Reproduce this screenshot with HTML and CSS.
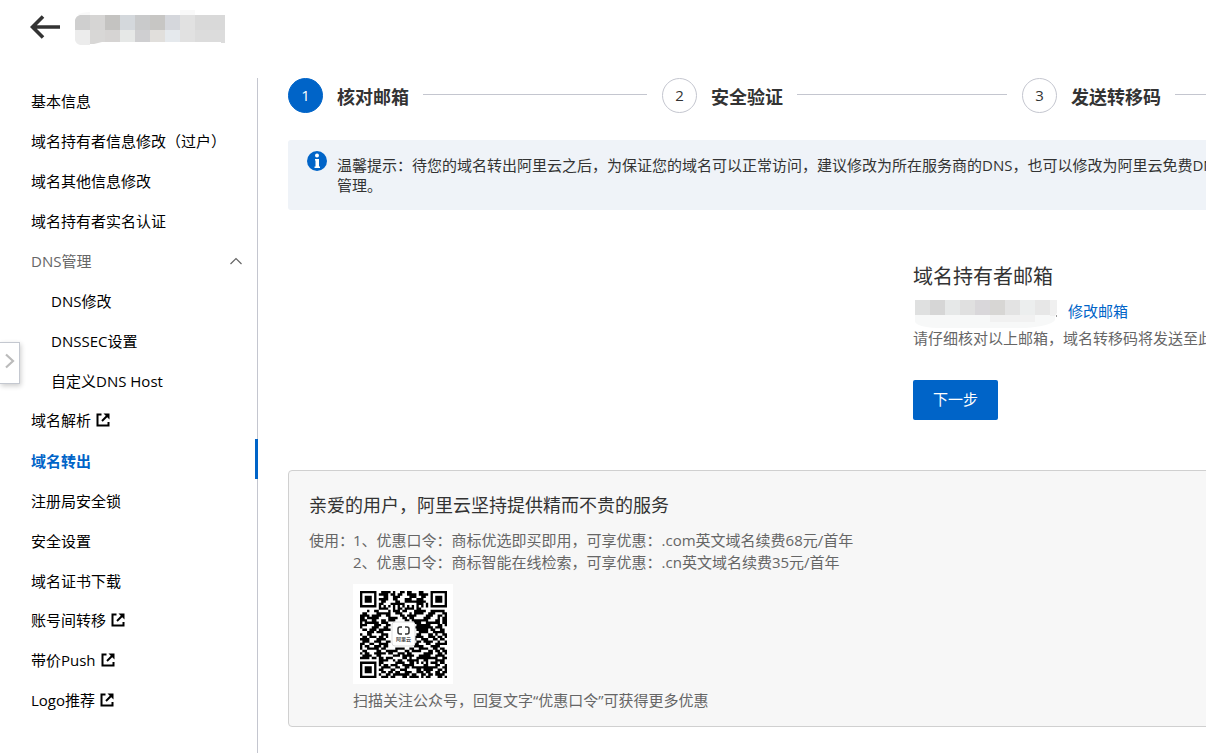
FILE: index.html
```html
<!DOCTYPE html>
<html lang="zh-CN">
<head>
<meta charset="utf-8">
<meta name="viewport" content="width=device-width, initial-scale=1">
<title>域名转出</title>
<link rel="stylesheet" href="styles.css">
</head>
<body>
<svg class="sprite" aria-hidden="true">
  <symbol id="external" viewBox="0 0 14 14">
    <path d="M5.500 1.500H1.500V12.500H12.500V9" fill="none" stroke="currentColor" stroke-width="2"/>
    <path d="M6 8L11 3" fill="none" stroke="currentColor" stroke-width="2"/>
    <path d="M7.500 0.500H13.500V6.500Z" fill="currentColor"/>
  </symbol>
</svg>
<header class="topbar">
  <button class="back" type="button" aria-label="返回">
    <svg width="30" height="24" viewBox="0 0 30 24"><path d="M13 1.500L2.500 12L13 22.500M2.500 12H30" fill="none" stroke="#333" stroke-width="3.600"/></svg>
  </button>
  <svg class="masked-name" width="150" height="36" viewBox="0 0 150 36" aria-hidden="true">
    <path fill="#f9f9f9" d="M105 0h15v5h-15zM2 5q5-3 13-3v3z"/>
    <path fill="#cfcfcf" d="M0 20V10Q1 6 5 5h10v15z"/>
    <path fill="#d6d5d4" d="M15 5h15v15H15z"/><path fill="#c4c3c1" d="M30 5h15v15H30z"/>
    <path fill="#d4d8dc" d="M45 5h15v15H45z"/><path fill="#c9cacb" d="M60 5h15v15H60z"/>
    <path fill="#c7c6c4" d="M75 5h15v15H75z"/><path fill="#d5d7dc" d="M90 5h15v15H90z"/>
    <path fill="#e1e1e1" d="M105 5h15v27h-15z"/><path fill="#d9d9d9" d="M120 5h30v15h-30z"/>
    <path fill="#ececec" d="M0 20h15v15H5q-4-1-5-5z"/><path fill="#d8d7d6" d="M15 20h15v12h-3l-8 2h-4z"/>
    <path fill="#d6d4d3" d="M30 20h15v12H30z"/><path fill="#e6e8e7" d="M45 20h15v12H45z"/>
    <path fill="#cfcfd1" d="M60 20h15v12H60z"/><path fill="#e1dfdc" d="M75 20h15v12H75z"/>
    <path fill="#e5e9ed" d="M90 20h15v12H90z"/><path fill="#dcdcdc" d="M120 20h30v13h-4v-1h-26z"/>
  </svg>
</header>

<div class="layout">
  <nav class="sidebar">
    <a class="item" href="#">基本信息</a>
    <a class="item" href="#">域名持有者信息修改（过户）</a>
    <a class="item" href="#">域名其他信息修改</a>
    <a class="item" href="#">域名持有者实名认证</a>
    <button class="item group" type="button" aria-expanded="true">DNS管理
      <svg width="12" height="8" viewBox="0 0 12 8"><path d="M0.500 7L6 1.500L11.500 7" fill="none" stroke="#666" stroke-width="1.200"/></svg>
    </button>
    <a class="item sub" href="#">DNS修改</a>
    <a class="item sub" href="#">DNSSEC设置</a>
    <a class="item sub" href="#">自定义DNS Host</a>
    <a class="item linkout" href="#">域名解析<svg class="ext"><use href="#external"/></svg></a>
    <a class="item active" href="#" aria-current="page">域名转出</a>
    <a class="item" href="#">注册局安全锁</a>
    <a class="item" href="#">安全设置</a>
    <a class="item" href="#">域名证书下载</a>
    <a class="item linkout" href="#">账号间转移<svg class="ext"><use href="#external"/></svg></a>
    <a class="item linkout" href="#">带价Push<svg class="ext"><use href="#external"/></svg></a>
    <a class="item linkout" href="#">Logo推荐<svg class="ext"><use href="#external"/></svg></a>
  </nav>

  <main class="main">
    <div class="content">
      <ol class="steps">
        <li class="step current"><span class="num">1</span><span class="name">核对邮箱</span></li>
        <li class="step"><span class="num">2</span><span class="name">安全验证</span></li>
        <li class="step"><span class="num">3</span><span class="name">发送转移码</span></li>
      </ol>

      <div class="notice">
        <svg width="20" height="20" viewBox="0 0 20 20" aria-hidden="true">
          <circle cx="10" cy="10" r="10" fill="#0064c8"/>
          <circle cx="10" cy="4.500" r="2" fill="#fff"/>
          <path d="M8 8h4v7.500h1V17H7.500v-1.500H8.500V9.500H8z" fill="#fff"/>
        </svg>
        <p>温馨提示：待您的域名转出阿里云之后，为保证您的域名可以正常访问，建议修改为所在服务商的DNS，也可以修改为阿里云免费DN<br>管理。</p>
      </div>

      <section class="mailbox">
        <h2>域名持有者邮箱</h2>
        <div class="address">
          <svg width="145" height="29" viewBox="0 0 145 29" aria-hidden="true">
            <path fill="#f7f8f8" d="M2 15h140v5q-4 6-30 8H30Q6 28 2 22z"/>
            <path fill="#dfe0e0" d="M2 0h15v15H2z"/><path fill="#d6d6d6" d="M17 0h15v15H17z"/>
            <path fill="#e6e8e8" d="M32 0h15v15H32z"/><path fill="#e0e0e0" d="M47 0h15v15H47z"/>
            <path fill="#d9d7da" d="M62 0h15v15H62z"/><path fill="#d7d6d4" d="M77 0h15v15H77z"/>
            <path fill="#e3e3e3" d="M92 0h15v15H92z"/><path fill="#eceeee" d="M107 0h15v15h-15z"/>
            <path fill="#e7e7e7" d="M122 0h15v15h-15z"/><path fill="#f0f0f0" d="M137 0h7v13l-2 3h-5z"/>
            <path fill="#f1f1f1" d="M77 15h45v7H77z"/><path fill="#999" d="M143 15h1v2h-1z"/>
          </svg>
          <a href="#">修改邮箱</a>
        </div>
        <p>请仔细核对以上邮箱，域名转移码将发送至此</p>
        <button class="primary" type="button">下一步</button>
      </section>

      <section class="promo">
        <h3>亲爱的用户，阿里云坚持提供精而不贵的服务</h3>
        <dl>
          <dt>使用：</dt>
          <dd>1、优惠口令：商标优选即买即用，可享优惠：.com英文域名续费68元/首年</dd>
          <dd>2、优惠口令：商标智能在线检索，可享优惠：.cn英文域名续费35元/首年</dd>
        </dl>
        <figure>
          <svg id="qr" class="qr" width="100" height="100" viewBox="0 0 100 100" role="img" aria-label="公众号二维码"></svg>
          <figcaption>扫描关注公众号，回复文字“优惠口令”可获得更多优惠</figcaption>
        </figure>
      </section>
    </div>
  </main>
</div>

<button class="drawer" type="button" aria-label="展开">
  <svg width="10" height="16" viewBox="0 0 10 16"><path d="M1 1.500L8 8L1 14.500" fill="none" stroke="#bbb" stroke-width="2.200"/></svg>
</button>
<script src="qr.js"></script>
</body>
</html>
```
FILE: styles.css
```css
* { box-sizing: border-box; }

body {
  margin: 0;
  min-height: 100vh;
  display: flex;
  flex-direction: column;
  overflow-x: hidden;
  background: #fff;
  color: #333;
  font: 15px/20px "Open Sans", "Noto Sans CJK SC", sans-serif;
}

h2, h3, p, ol, dl, dd, figure { margin: 0; padding: 0; }
h2, h3 { font-weight: 400; }
button { font: inherit; border: 0; background: none; padding: 0; cursor: pointer; }
a { color: #0064c8; text-decoration: none; }
.sprite { position: absolute; width: 0; height: 0; }

.topbar {
  display: flex;
  gap: 15px;
  height: 78px;
  padding: 10px 30px;
}
.back { height: 34px; display: flex; align-items: center; }

.layout { flex: 1; display: flex; min-width: 0; }

.sidebar {
  flex: 0 0 258px;
  min-width: 0;
  padding-top: 1px;
  border-right: 1px solid #c4c6cf;
}
.item {
  display: flex;
  align-items: center;
  width: 100%;
  height: 40px;
  padding: 4px 15px 0 31px;
  color: #000;
  white-space: nowrap;
}
.group { justify-content: space-between; color: #666; }
.sub { padding-left: 51px; }
.linkout { padding-top: 2px; }
.active {
  width: 258px;
  color: #0064c8;
  font-weight: 700;
  background: linear-gradient(#0064c8, #0064c8) right / 3px 100% no-repeat;
}
.ext { width: 14px; height: 14px; margin-left: 5px; }

.main { flex: 1; min-width: 0; overflow: hidden; padding-left: 30px; }
.content { width: 1390px; }

.steps { display: flex; list-style: none; gap: 15px; }
.step {
  flex: 0 0 359px;
  display: flex;
  align-items: center;
  gap: 14px;
}
.step:nth-child(2) { flex-basis: 345px; }
.step::after { content: ""; flex: 1; height: 1px; margin-bottom: 2px; background: #c4c6cf; }
.num {
  width: 35px;
  height: 35px;
  border: 1px solid #c4c6cf;
  border-radius: 50%;
  line-height: 33px;
  text-align: center;
}
.current .num { background: #0064c8; border-color: #0064c8; color: #fff; }
.name { font-size: 18px; font-weight: 700; line-height: 24px; padding-top: 3px; }

.notice {
  display: flex;
  gap: 10px;
  margin-top: 27px;
  padding: 15px 19px;
  min-height: 70px;
  background: #eff3f8;
  border-radius: 3px;
}
.notice svg { flex: none; margin-top: -4px; }
.notice p { white-space: nowrap; }

.mailbox { padding: 50px 0 0 625px; }
.mailbox h2 { font-size: 20px; line-height: 30px; padding-top: 2px; }
.address { display: flex; gap: 10px; align-items: flex-start; padding-top: 8px; height: 36px; }
.address a { padding-top: 1px; }
.mailbox p { color: #666; }
.primary {
  width: 85px;
  height: 40px;
  margin-top: 32px;
  padding-bottom: 2px;
  border-radius: 2px;
  background: #0064c8;
  color: #fff;
}

.promo {
  margin-top: 50px;
  padding: 20px 20px 16px;
  border: 1px solid #d0d0d0;
  border-radius: 4px;
  background: #f7f7f7;
}
.promo h3 { font-size: 18px; line-height: 28px; }
.promo dl {
  display: grid;
  grid-template-columns: 44px 1fr;
  margin-top: 10px;
  line-height: 22px;
  color: #666;
}
.promo dt { white-space: nowrap; }
.promo dd { grid-column: 2; }
.promo figure { padding: 11px 0 0 44px; color: #666; }
.qr { display: block; background: #fff; margin-bottom: 6px; }

.drawer {
  position: fixed;
  left: 0;
  top: 342px;
  width: 20px;
  height: 42px;
  border: 1px solid #c4c8d0;
  border-left: 0;
  background: #fff;
  box-shadow: 1px 2px 5px rgba(0, 0, 0, 0.2);
  display: flex;
  align-items: center;
  padding: 0 0 4px 5px;
}
```
FILE: qr.js
```js
const rows = [
  '1111111001111010011011000110001111111',
  '1000001011110110110011110111101000001',
  '1011101000110011100001110011001011101',
  '1011101011110011000111001110001011101',
  '1011101001100001100111111111001011101',
  '1000001011000111111000001110101000001',
  '1111111010101010101010101010101111111',
  '0000000011110010110111101100000000000',
  '0001001100001011101100011111001111110',
  '0110000111111001110001011110011100011',
  '1111011110011000011011110000111001101',
  '1101111100001111001101100001110001011',
  '1110011001101110000110111111100011011',
  '1011111101110000000000011100111111011',
  '1110001110011000000000001111110001101',
  '1000011100110000000000011111111011100',
  '0110111011111000000000001111101100110',
  '0001110111000000000000000111100111110',
  '1001100001110000000000001100011010011',
  '0110111011010000000000011110011101101',
  '1111000111100000000000010011100110110',
  '0111001110011000000000001101111001001',
  '1100110011110000000000011000110011111',
  '1011001110110000000000011110001111000',
  '1001111101100001111001100111100110110',
  '0110000110011111000110111100011011011',
  '1011001111101100111011000001111001101',
  '0111100110000011101111100111110011110',
  '1111011011011100001101001111111110011',
  '0000000011110010110011111001100011110',
  '1111111011000001111001101010101110110',
  '1000001010110111001111100001100011001',
  '1011101001111001100110111111111110011',
  '1011101011000110011100001101111001101',
  '1011101001101101100111001110110011011',
  '1000001010011011111110110011011011110',
  '1111111001110110001101111010110001101'
];

const origin = 7;
const cell = 87 / 37;
let path = '';
rows.forEach((row, y) => {
  [...row].forEach((bit, x) => {
    if (bit === '1') {
      path += `M${origin + x * cell} ${origin + y * cell}h${cell}v${cell}h-${cell}z`;
    }
  });
});

document.getElementById('qr').innerHTML = `
  <path d="${path}" fill="#000"/>
  <rect x="39" y="38" width="23" height="24" rx="3" fill="#fff" stroke="#ddd"/>
  <path d="M49 43h-2q-2 0-2 2v3q0 2 2 2h2M52 43h2q2 0 2 2v3q0 2-2 2h-2" fill="none" stroke="#333" stroke-width="1.500"/>
  <text x="50.500" y="57" text-anchor="middle" font-size="5" font-weight="700" fill="#555">阿里云</text>`;
```
